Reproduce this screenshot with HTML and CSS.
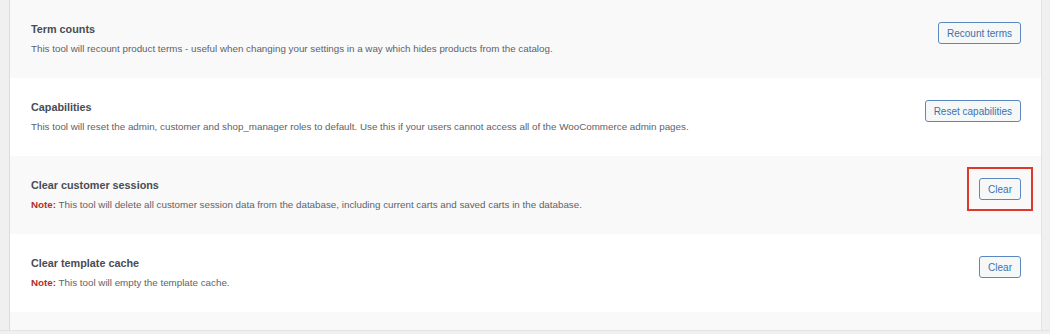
FILE: index.html
```html
<!DOCTYPE html>
<html lang="en">
<head>
  <meta charset="UTF-8">
  <title>Tools</title>
  <link rel="stylesheet" href="styles.css">
</head>
<body>
  <div class="tools-table">
    <div class="tool-row alt">
      <div class="tool-info">
        <div class="tool-title">Term counts</div>
        <div class="tool-desc">This tool will recount product terms - useful when changing your settings in a way which hides products from the catalog.</div>
      </div>
      <button class="tool-button">Recount terms</button>
    </div>

    <div class="tool-row">
      <div class="tool-info">
        <div class="tool-title">Capabilities</div>
        <div class="tool-desc">This tool will reset the admin, customer and shop_manager roles to default. Use this if your users cannot access all of the WooCommerce admin pages.</div>
      </div>
      <button class="tool-button">Reset capabilities</button>
    </div>

    <div class="tool-row alt">
      <div class="tool-info">
        <div class="tool-title">Clear customer sessions</div>
        <div class="tool-desc"><span class="note">Note:</span> This tool will delete all customer session data from the database, including current carts and saved carts in the database.</div>
      </div>
      <div class="highlight">
        <button class="tool-button">Clear</button>
      </div>
    </div>

    <div class="tool-row">
      <div class="tool-info">
        <div class="tool-title">Clear template cache</div>
        <div class="tool-desc"><span class="note">Note:</span> This tool will empty the template cache.</div>
      </div>
      <button class="tool-button">Clear</button>
    </div>

    <div class="tool-row alt partial"></div>
  </div>
  <div class="footer-strip"></div>
</body>
</html>
```

FILE: styles.css
```css
body {
  margin: 0;
  background: #f0f0f1;
  font-family: 'Liberation Sans', Arial, sans-serif;
  overflow: hidden;
}

.tools-table {
  margin: 0 8px 0 9px;
  border-left: 1px solid #dcdcde;
  border-right: 1px solid #e2e2e4;
  background: #fff;
}

.tool-row {
  display: flex;
  justify-content: space-between;
  align-items: flex-start;
  height: 78px;
  box-sizing: border-box;
  padding: 22px 20px 0 21px;
}

.tool-row.alt {
  background: #f9f9f9;
}

.tool-row.partial {
  height: 18px;
  padding: 0;
}

.tool-title {
  font-size: 10.8px;
  font-weight: bold;
  color: #474d54;
  line-height: 15px;
}

.tool-desc {
  margin-top: 4px;
  font-size: 9.8px;
  color: #5d6369;
  line-height: 15px;
}

.note {
  color: #b32d2e;
  font-weight: bold;
}

.tool-button {
  font-family: 'Liberation Sans', Arial, sans-serif;
  font-size: 10px;
  color: #3a72b0;
  background: #f6f7f7;
  border: 1px solid #5b88c2;
  border-radius: 3px;
  height: 22px;
  padding: 0 8px;
  cursor: pointer;
}

.highlight {
  margin: -11px -12px 0 0;
  padding: 9px 10px;
  border: 2px solid #e2372b;
}

.highlight .tool-button {
  display: block;
}

.footer-strip {
  border-top: 1px solid #e4e4e6;
  height: 5px;
}
```
